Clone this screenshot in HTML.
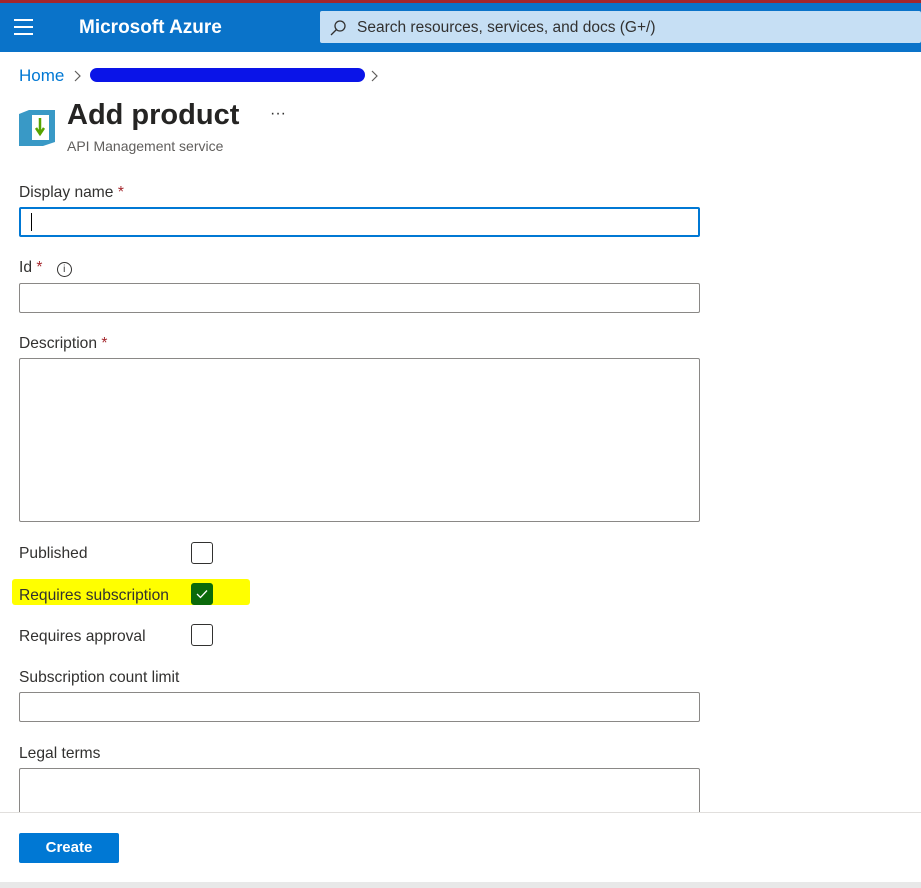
<!DOCTYPE html><html><head><style>
body{margin:0;width:921px;height:888px;overflow:hidden;background:#fff;font-family:"Liberation Sans",sans-serif;color:#323130;position:relative}
.top{position:absolute;left:0;top:0;width:921px;height:52px;background:#0a73c9;border-top:3px solid #a4262c;box-sizing:border-box}
.a{position:absolute}
.lbl{position:absolute;left:19px;font-size:15.6px;color:#323130}
.req{color:#a4262c}
.box{position:absolute;left:19px;width:681px;border:1px solid #8a8886;border-radius:2px;box-sizing:border-box;background:#fff}
.cb{position:absolute;left:191px;width:22px;height:22px;border:1px solid #323130;border-radius:3px;box-sizing:border-box}
</style></head><body>
<div class="top">
<div class="a" style="left:14px;top:16px;width:19px"><div style="height:2px;background:#fff;margin-bottom:5px"></div><div style="height:2px;background:#fff;margin-bottom:5px"></div><div style="height:2px;background:#fff"></div></div>
<div class="a" style="left:79px;top:14px;color:#fff;font-size:19px;font-weight:bold">Microsoft Azure</div>
<div class="a" style="left:320px;top:8px;width:601px;height:32px;background:#c6dff4;border-radius:2px"></div>
<svg class="a" style="left:329px;top:16px" width="18" height="18"><circle cx="11" cy="7" r="5" fill="none" stroke="#323130" stroke-width="1.3"/><path d="M7.5 10.5L2 16" stroke="#323130" stroke-width="1.3"/></svg>
<div class="a" style="left:357px;top:16px;font-size:15.5px;color:#323130">Search resources, services, and docs (G+/)</div>
</div>
<div class="a" style="left:19px;top:66px;font-size:17px;color:#0078d4">Home</div>
<svg class="a" style="left:73px;top:69px" width="10" height="14"><path d="M2 2L7 7L2 12" stroke="#605e5c" fill="none" stroke-width="1.2"/></svg>
<div class="a" style="left:90px;top:68px;width:275px;height:14px;background:#0a14e8;border-radius:8px"></div>
<svg class="a" style="left:370px;top:69px" width="10" height="14"><path d="M2 2L7 7L2 12" stroke="#605e5c" fill="none" stroke-width="1.2"/></svg>
<svg class="a" style="left:19px;top:110px" width="36" height="36"><path d="M0 4L10 0H36V32L24 36H0Z" fill="#3999c6"/><rect x="13" y="5" width="17" height="25" fill="#fff"/><path d="M21 8V22M17 18L21 24L25 18" stroke="#57a300" stroke-width="2.5" fill="none"/></svg>
<div class="a" style="left:67px;top:99px;font-size:29px;font-weight:bold;color:#252423">Add product</div>
<div class="a" style="left:270px;top:105px;font-size:16px">···</div>
<div class="a" style="left:67px;top:138px;font-size:14px;color:#605e5c">API Management service</div>

<div class="lbl" style="top:184px">Display name <span class="req">*</span></div>
<div class="box" style="top:207px;height:30px;border:2px solid #0078d4"><div style="position:absolute;left:10px;top:4px;width:1px;height:18px;background:#000"></div></div>
<div class="lbl" style="top:259px">Id <span class="req">*</span> <span style="display:inline-block;width:13px;height:13px;border:1px solid #323130;border-radius:50%;font-size:10px;text-align:center;line-height:13px;margin-left:10px">i</span></div>
<div class="box" style="top:283px;height:30px"></div>
<div class="lbl" style="top:335px">Description <span class="req">*</span></div>
<div class="box" style="top:358px;height:164px"></div>
<div class="lbl" style="top:545px">Published</div>
<div class="cb" style="top:542px"></div>
<div class="a" style="left:12px;top:579px;width:238px;height:26px;background:#ffff00;border-radius:3px"></div>
<div class="lbl" style="top:587px">Requires subscription</div>
<div class="cb" style="top:583px;background:#0b6a0b;border-color:#0b6a0b"><svg width="20" height="20"><path d="M5 10L8.5 13.5L15 6.5" stroke="#fff" stroke-width="1.3" fill="none"/></svg></div>
<div class="lbl" style="top:628px">Requires approval</div>
<div class="cb" style="top:624px"></div>
<div class="lbl" style="top:669px">Subscription count limit</div>
<div class="box" style="top:692px;height:30px"></div>
<div class="lbl" style="top:745px">Legal terms</div>
<div class="box" style="top:768px;height:60px"></div>
<div class="a" style="left:0;top:812px;width:921px;height:70px;background:#fff;border-top:1px solid #e1dfdd"></div>
<div class="a" style="left:19px;top:833px;width:100px;height:30px;background:#0078d4;border-radius:2px;color:#fff;font-size:15px;font-weight:bold;text-align:center;line-height:30px">Create</div>
<div class="a" style="left:0;top:882px;width:921px;height:6px;background:#e8e8e8"></div>
</body></html>
